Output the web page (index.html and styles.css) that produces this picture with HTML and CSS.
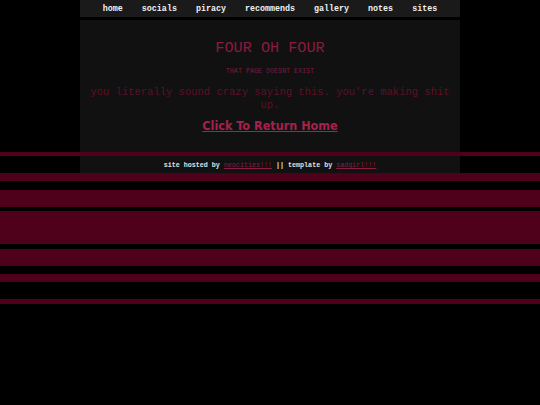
FILE: index.html
```html
<!DOCTYPE html>
<html>
<head>
<meta charset="utf-8">
<link rel="stylesheet" href="styles.css">
</head>
<body>
<div class="wrap">
  <nav class="nav">
    <a href="#">home</a>
    <a href="#">socials</a>
    <a href="#">piracy</a>
    <a href="#">recommends</a>
    <a href="#">gallery</a>
    <a href="#">notes</a>
    <a href="#">sites</a>
  </nav>
  <main class="main">
    <h1 class="title">FOUR OH FOUR</h1>
    <h2 class="subtitle">THAT PAGE DOESNT EXIST</h2>
    <p class="msg">you literally sound crazy saying this. you're making shit up.</p>
    <a class="home" href="#">Click To Return Home</a>
  </main>
  <footer class="foot">site hosted by <a href="#">neocities!!!</a> || template by <a href="#">sadgirl!!!</a></footer>
</div>
</body>
</html>
```
FILE: styles.css
```css
html {
  min-height: 100%;
  background-color: #000;
  background-image: linear-gradient(to bottom,
    transparent 0, transparent 152px,
    #4f001a 152px, #4f001a 156px,
    transparent 156px, transparent 173px,
    #4f001a 173px, #4f001a 181px,
    transparent 181px, transparent 190px,
    #4f001a 190px, #4f001a 207px,
    transparent 207px, transparent 211px,
    #4f001a 211px, #4f001a 244px,
    transparent 244px, transparent 249px,
    #4f001a 249px, #4f001a 266px,
    transparent 266px, transparent 274px,
    #4f001a 274px, #4f001a 282px,
    transparent 282px, transparent 299px,
    #4f001a 299px, #4f001a 304px,
    transparent 304px);
  background-repeat: no-repeat;
  background-size: 100% 405px;
}
body {
  margin: 0;
  font-family: "Liberation Mono", "Courier New", monospace;
}
.wrap {
  width: 380px;
  margin: 0 auto;
}
.nav {
  height: 17px;
  box-sizing: border-box;
  padding-top: 2px;
  background: #1a1a1a;
  display: flex;
  justify-content: center;
  align-items: center;
  gap: 19px;
}
.nav a {
  color: #f0f0f0;
  text-decoration: none;
  font-weight: bold;
  font-size: 8.35px;
  line-height: 15px;
}
.main {
  margin-top: 3px;
  height: 132px;
  box-sizing: border-box;
  background: #111;
  padding: 19px 10px 0;
  text-align: center;
}
.title {
  margin: 0;
  font-weight: normal;
  font-size: 15.2px;
  line-height: 18px;
  color: #8c1a3e;
}
.subtitle {
  margin: 10px 0 0;
  font-weight: normal;
  font-size: 6.7px;
  line-height: 9px;
  color: #80183a;
}
.msg {
  margin: 10px 0 0;
  font-size: 10.5px;
  line-height: 13px;
  color: #5e1029;
}
.home {
  display: inline-block;
  margin-top: 6px;
  font-family: "DejaVu Sans Condensed", "DejaVu Sans", sans-serif;
  font-weight: bold;
  font-size: 12.5px;
  line-height: 16px;
  color: #a8204e;
  text-decoration: underline;
}
.foot {
  margin-top: 4px;
  height: 17px;
  box-sizing: border-box;
  padding-top: 2px;
  background: #111;
  text-align: center;
  font-size: 6.7px;
  font-weight: bold;
  line-height: 15px;
  color: #e0e0e0;
}
.foot a {
  color: #8a1c40;
  font-weight: normal;
  text-decoration: underline;
}
```
